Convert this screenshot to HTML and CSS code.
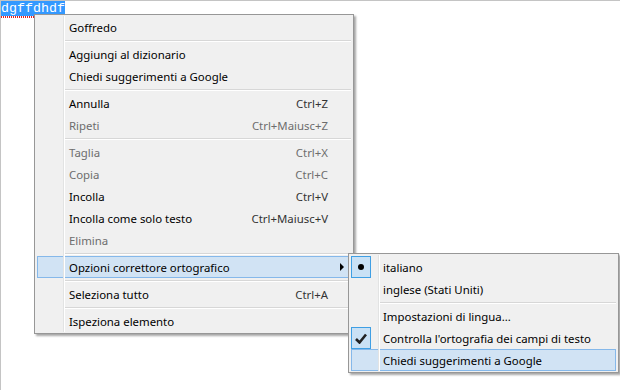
FILE: index.html
```html
<!DOCTYPE html>
<html>

<head>
    <title>Controllo ortografico</title>
    <link rel="stylesheet" href="styles.css">
</head>

<body>
    <div class="field">
        <span class="word">dgffdhdf</span>
        <div class="spell"></div>
    </div>

    <div class="menu" id="contextMenu">
        <div class="item">Goffredo</div>
        <div class="sep"></div>
        <div class="item">Aggiungi al dizionario</div>
        <div class="item">Chiedi suggerimenti a Google</div>
        <div class="sep"></div>
        <div class="item"><span class="label">Annulla</span><span class="key">Ctrl+Z</span></div>
        <div class="item off"><span class="label">Ripeti</span><span class="key">Ctrl+Maiusc+Z</span></div>
        <div class="sep"></div>
        <div class="item off"><span class="label">Taglia</span><span class="key">Ctrl+X</span></div>
        <div class="item off"><span class="label">Copia</span><span class="key">Ctrl+C</span></div>
        <div class="item"><span class="label">Incolla</span><span class="key">Ctrl+V</span></div>
        <div class="item"><span class="label">Incolla come solo testo</span><span class="key">Ctrl+Maiusc+V</span></div>
        <div class="item off">Elimina</div>
        <div class="sep"></div>
        <div class="item hot"><span class="label">Opzioni correttore ortografico</span><span class="arrow"></span></div>
        <div class="sep"></div>
        <div class="item"><span class="label">Seleziona tutto</span><span class="key">Ctrl+A</span></div>
        <div class="sep"></div>
        <div class="item">Ispeziona elemento</div>
    </div>

    <div class="menu submenu" id="spellMenu">
        <div class="item"><span class="ico"><span class="dot"></span></span>italiano</div>
        <div class="item">inglese (Stati Uniti)</div>
        <div class="sep"></div>
        <div class="item">Impostazioni di lingua...</div>
        <div class="item"><span class="ico">
            <svg width="12" height="11" viewBox="0 0 12 11"><path d="M1 6 L4.5 9.5 L11 1.5" fill="none" stroke="#222" stroke-width="2.6"/></svg>
        </span>Controlla l'ortografia dei campi di testo</div>
        <div class="item hot">Chiedi suggerimenti a Google</div>
    </div>
</body>
</html>
```

FILE: styles.css
```css
body {
    margin: 0;
    padding: 0;
    background-color: #ffffff;
    overflow: hidden;
}

.field {
    height: 100vh;
    border-top: 1px solid #c4c4c4;
    border-left: 1px solid #c4c4c4;
    font-family: "Liberation Mono", monospace;
    font-size: 13.33px;
    line-height: 15px;
}

.word {
    display: inline-block;
    background-color: #3399ff;
    color: #ffffff;
    height: 15px;
}

.spell {
    width: 64px;
    height: 2px;
    background-image: linear-gradient(90deg, #e02020 50%, transparent 50%);
    background-size: 2px 2px;
}

/* context menus */
.menu {
    position: absolute;
    left: 34px;
    top: 14px;
    width: 314px;
    padding: 1px 2px;
    background-color: #f0f0f0;
    border: 1px solid #979797;
    box-shadow: 2px 2px 2px rgba(0, 0, 0, 0.35);
    font-family: "Noto Sans", sans-serif;
    font-size: 11.4px;
    color: #000000;
}

.menu::before {
    content: "";
    position: absolute;
    left: 28px;
    top: 1px;
    bottom: 1px;
    width: 1px;
    background-color: #e2e3e3;
    box-shadow: 1px 0 0 #ffffff;
}

.submenu {
    left: 348px;
    top: 253px;
    width: 265px;
    padding: 2px 2px 1px 2px;
}

.submenu::before {
    left: 29px;
}

.item {
    display: flex;
    align-items: center;
    height: 22px;
    padding-left: 32px;
}

.item .label {
    flex: 1;
}

.item .key {
    margin-right: 23px;
    color: #333333;
}

.item.off,
.item.off .key {
    color: #6d6d6d;
}

.item.hot {
    background-color: #d1e3f4;
    box-shadow: inset 0 0 0 1px #85b8ea;
}

.arrow {
    width: 0;
    height: 0;
    border-top: 4px solid transparent;
    border-bottom: 4px solid transparent;
    border-left: 4px solid #000000;
    margin-right: 7px;
}

.sep {
    margin: 2px 0 1px 27px;
    height: 0;
    border-top: 1px solid #d7d7d7;
    border-bottom: 1px solid #ffffff;
}

.ico {
    box-sizing: border-box;
    width: 20px;
    height: 22px;
    margin-left: -32px;
    margin-right: 12px;
    display: flex;
    align-items: center;
    justify-content: center;
    background-color: #c9e1f5;
    border: 1px solid #3f9fe4;
}

.dot {
    width: 6px;
    height: 6px;
    border-radius: 50%;
    background-color: #000000;
}
```
